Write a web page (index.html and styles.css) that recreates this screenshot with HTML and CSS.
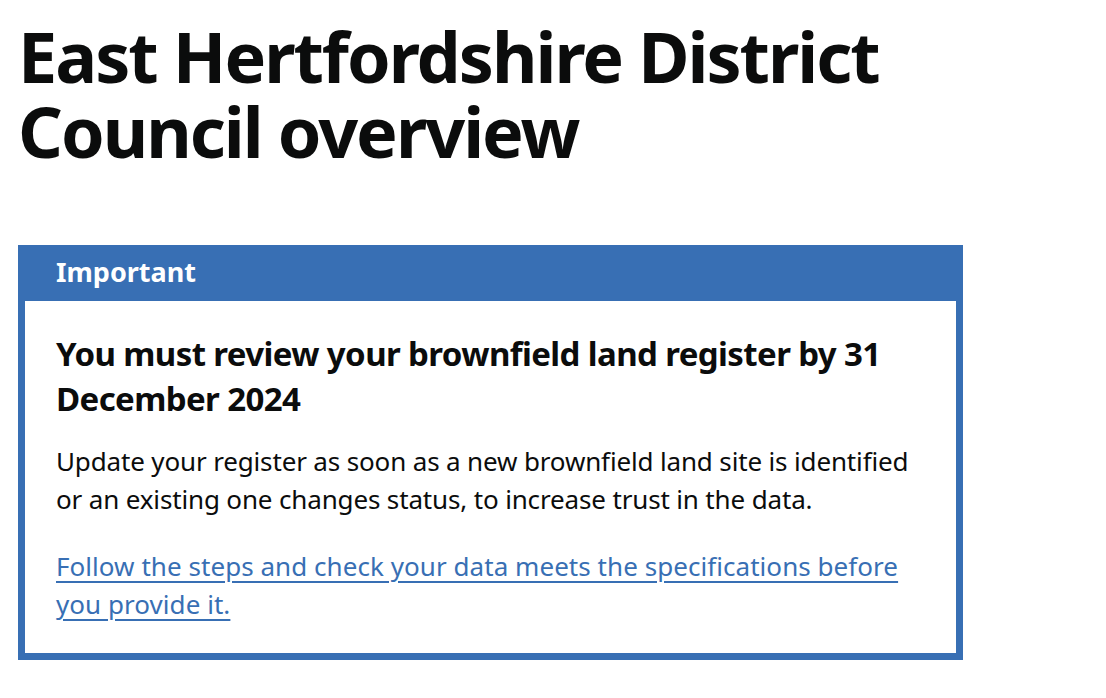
FILE: index.html
```html
<!DOCTYPE html>
<html lang="en">
<head>
<meta charset="utf-8">
<title>East Hertfordshire District Council overview</title>
<link rel="stylesheet" href="styles.css">
</head>
<body>
<main class="page">
  <h1 class="page-title">East Hertfordshire District Council overview</h1>
  <div class="banner" role="region" aria-labelledby="banner-title">
    <div class="banner-header">
      <h2 class="banner-title" id="banner-title">Important</h2>
    </div>
    <div class="banner-content">
      <p class="banner-heading">You must review your brownfield land register by 31 December 2024</p>
      <p class="banner-body">Update your register as soon as a new brownfield land site is identified or an existing one changes status, to increase trust in the data.</p>
      <p class="banner-body banner-last"><a class="banner-link" href="#">Follow the steps and check your data meets the specifications before you provide it.</a></p>
    </div>
  </div>
</main>
</body>
</html>
```

FILE: styles.css
```css
html, body {
  margin: 0;
  padding: 0;
  background: #ffffff;
}

body {
  font-family: "Noto Sans", "Liberation Sans", Arial, sans-serif;
  color: #0b0c0c;
}

.page {
  padding: 19px 18px 0 18px;
}

.page-title {
  margin: 0 0 76px 0;
  font-size: 70px;
  line-height: 75px;
  font-weight: 700;
  letter-spacing: -2px;
}

.banner {
  width: 945px;
  box-sizing: border-box;
  border: 7px solid #386fb4;
  border-top: 0;
  background: #386fb4;
}

.banner-header {
  padding: 8px 31px 10px 31px;
}

.banner-title {
  margin: 0;
  font-size: 27px;
  line-height: 38px;
  font-weight: 700;
  color: #ffffff;
}

.banner-content {
  background: #ffffff;
  padding: 30px 30px 30px 31px;
}

.banner-heading {
  margin: 0 0 22px 0;
  font-size: 33px;
  line-height: 45px;
  font-weight: 700;
  letter-spacing: -0.6px;
}

.banner-body {
  margin: 0 0 30px 0;
  font-size: 26px;
  line-height: 37.5px;
  letter-spacing: -0.15px;
}

.banner-last {
  margin-bottom: 0;
}

.banner-link {
  color: #386fb4;
  letter-spacing: 0.05px;
  text-decoration: underline;
  text-decoration-thickness: 2px;
  text-underline-offset: 5px;
}
```
